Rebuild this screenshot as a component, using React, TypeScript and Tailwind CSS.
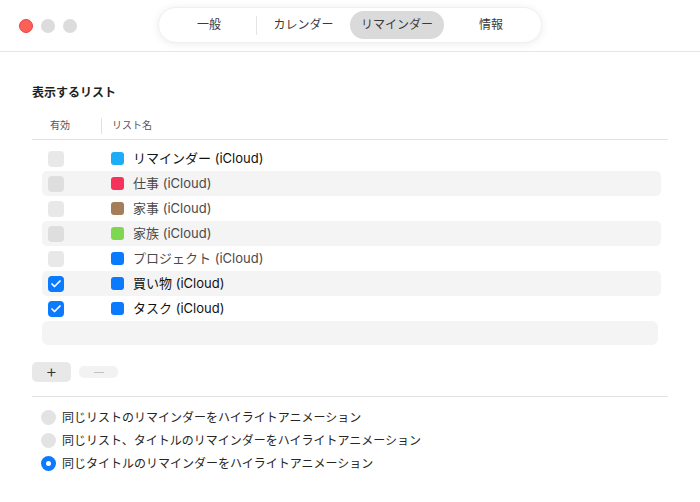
import { Check } from 'lucide-react'

const tabs = ['一般', 'カレンダー', 'リマインダー', '情報']

const lists = [
  { name: 'リマインダー (iCloud)', color: 'bg-[#1badf8]', checked: false, strong: true },
  { name: '仕事 (iCloud)', color: 'bg-[#f7325a]', checked: false, strong: false },
  { name: '家事 (iCloud)', color: 'bg-[#a47d5b]', checked: false, strong: false },
  { name: '家族 (iCloud)', color: 'bg-[#7fd651]', checked: false, strong: false },
  { name: 'プロジェクト (iCloud)', color: 'bg-[#0a7aff]', checked: false, strong: false },
  { name: '買い物 (iCloud)', color: 'bg-[#0a7aff]', checked: true, strong: true },
  { name: 'タスク (iCloud)', color: 'bg-[#0a7aff]', checked: true, strong: true },
]

const options = [
  '同じリストのリマインダーをハイライトアニメーション',
  '同じリスト、タイトルのリマインダーをハイライトアニメーション',
  '同じタイトルのリマインダーをハイライトアニメーション',
]

export default function App() {
  return (
    <div className="w-[700px] h-[502px] bg-white font-['Inter','Noto_Sans_CJK_JP',sans-serif] text-[#262626] overflow-hidden">
      {/* Title bar */}
      <div className="h-[52px] border-b border-[#e6e6e6] grid grid-cols-[1fr_auto_1fr] items-center">
        <div className="flex items-center gap-[8px] pl-[19px]">
          <span className="w-[14px] h-[14px] rounded-full bg-[#fe5f57] border border-[#e2463f]" />
          <span className="w-[14px] h-[14px] rounded-full bg-[#dcdcdc]" />
          <span className="w-[14px] h-[14px] rounded-full bg-[#dcdcdc]" />
        </div>
        <div className="w-[384px] h-[36px] mt-[-1px] rounded-full bg-white shadow-[0_1px_8px_rgba(0,0,0,0.08)] border border-[#f0f0f0] p-[3px] flex items-center">
          {tabs.map((t, i) => (
            <div key={t} className="flex-1 flex items-center h-full">
              {i === 1 && <span className="w-px h-[19px] bg-[#e4e4e4]" />}
              <div
                className={
                  i === 2
                    ? 'flex-1 h-[28px] rounded-full bg-[#dadada] flex items-center justify-center text-[12px] text-[#3a3a3a]'
                    : 'flex-1 h-[28px] flex items-center justify-center text-[12px] text-[#3a3a3a]'
                }
              >
                {t}
              </div>
            </div>
          ))}
        </div>
        <div />
      </div>

      {/* Content */}
      <div className="px-[32px]">
        <div className="pt-[32px] text-[12px] font-bold text-[#1f1f1f] leading-[18px]">表示するリスト</div>

        {/* Header */}
        <div className="mt-[10px] h-[28px] border-b border-[#e2e2e2] flex items-center text-[10px] text-[#555]">
          <div className="w-[69px] pl-[18px]">有効</div>
          <span className="w-px h-[16px] bg-[#e0e0e0]" />
          <div className="pl-[10px]">リスト名</div>
        </div>

        {/* Rows */}
        <div className="pt-[6px] pl-[10px] pr-[7px] flex flex-col">
          {lists.map((l, i) => (
            <div
              key={l.name}
              className={
                i % 2 === 1
                  ? 'h-[25px] rounded-[5px] bg-[#f4f4f4] flex items-center'
                  : 'h-[25px] flex items-center'
              }
            >
              <div className="w-[69px] pl-[6px] flex items-center">
                {l.checked ? (
                  <span className="w-[16px] h-[16px] rounded-[4px] bg-[#0a7aff] flex items-center justify-center">
                    <Check className="w-[12px] h-[12px] text-white" strokeWidth={3.5} />
                  </span>
                ) : (
                  <span className="w-[16px] h-[16px] rounded-[4px] bg-black/[0.09]" />
                )}
              </div>
              <span className={`w-[13px] h-[13px] rounded-[3px] ${l.color}`} />
              <span
                className={
                  l.strong
                    ? 'ml-[9px] text-[13px] text-[#111]'
                    : 'ml-[9px] text-[13px] text-[#4a4a4a]'
                }
              >
                {l.name}
              </span>
            </div>
          ))}
          <div className="h-[24px] rounded-[6px] bg-[#f4f4f4] mr-[3px]" />
        </div>

        {/* Add / remove */}
        <div className="mt-[17px] flex items-center gap-[8px]">
          <button className="w-[39px] h-[20px] rounded-[5px] bg-[#e8e8e8] flex items-center justify-center text-[18px] font-light leading-none text-[#333]">
            +
          </button>
          <button className="w-[39px] h-[12px] rounded-[5px] bg-[#f2f2f2] flex items-center justify-center">
            <span className="w-[10px] h-px bg-[#c2c2c2]" />
          </button>
        </div>

        <div className="mt-[14px] border-t border-[#e2e2e2]" />

        {/* Radios */}
        <div className="pt-[9px] pl-[9px] flex flex-col">
          {options.map((o, i) => (
            <div key={o} className="h-[23px] flex items-center gap-[6px]">
              {i === 2 ? (
                <span className="w-[15px] h-[15px] rounded-full bg-[#0a7aff] flex items-center justify-center">
                  <span className="w-[5px] h-[5px] rounded-full bg-white" />
                </span>
              ) : (
                <span className="w-[15px] h-[15px] rounded-full bg-[#e3e3e3]" />
              )}
              <span className="text-[12px] text-[#262626]">{o}</span>
            </div>
          ))}
        </div>
      </div>
    </div>
  )
}
